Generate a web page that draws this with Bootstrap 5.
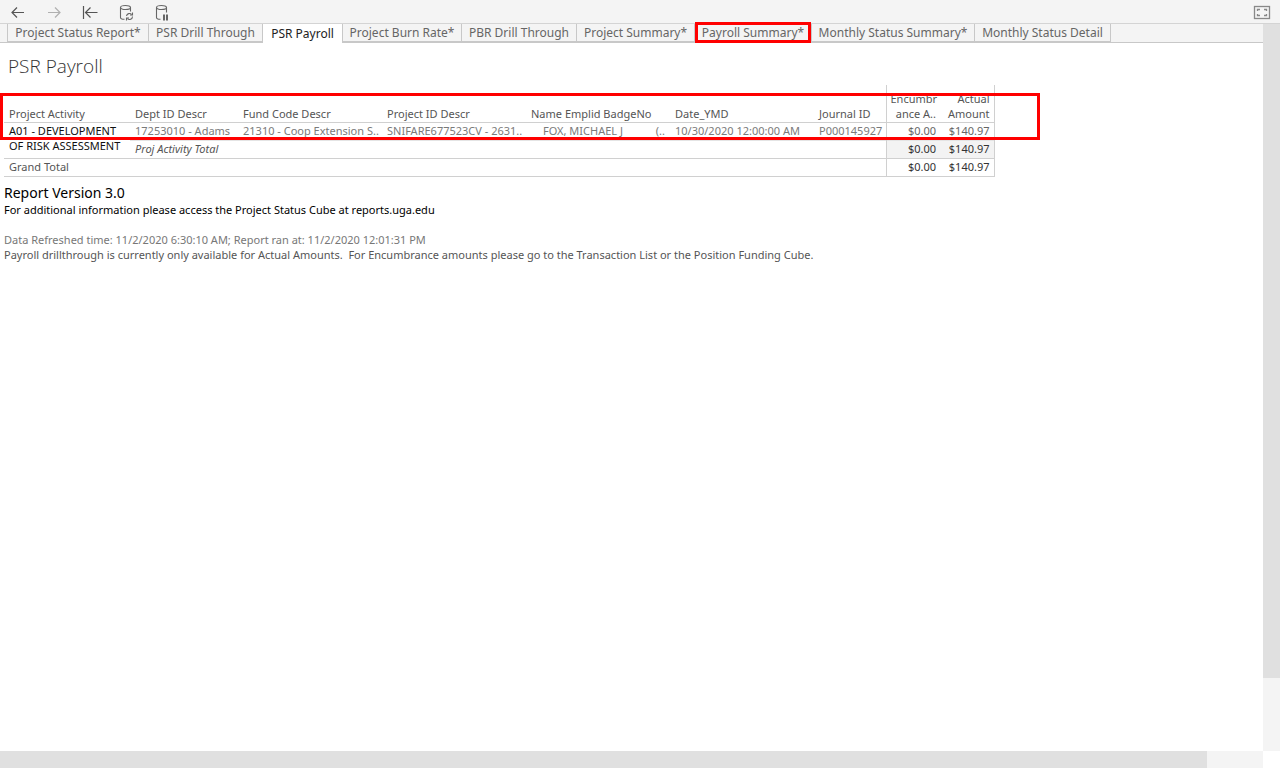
<!DOCTYPE html>
<html lang="en">
<head>
<meta charset="utf-8">
<meta name="viewport" content="width=device-width, initial-scale=1">
<title>PSR Payroll</title>
<link href="https://cdn.jsdelivr.net/npm/bootstrap@5.3.0/dist/css/bootstrap.min.css" rel="stylesheet">
<script src="https://cdn.jsdelivr.net/npm/bootstrap@5.3.0/dist/js/bootstrap.bundle.min.js" defer></script>
<style>
  :root { --line: #d0d0d0; --bar: #f4f4f4; --thumb: #e0e0e0; --hot: #f00; }
  body { font-family: "Noto Sans", "Open Sans", sans-serif; font-size: 11px; line-height: 15px; color: #555; }
  .toolbar { height: 24px; background: var(--bar); border-bottom: 1px solid #d4d4d4; padding: 0 8px; }
  .toolbar .tool { width: 20px; height: 22px; }
  .tools { gap: 16px; }
  .sheet-tabs { display: grid; grid-template-columns: 142px 114px 80px 119px 115px 118px 117px 163px 136px;
    height: 19px; background: var(--bar); border-bottom: 1px solid #c8c8c8; padding-left: 7px; }
  .sheet-tab { height: 18px; line-height: 17px; font-size: 12px; color: #666; background: var(--bar);
    border: 0; border-right: 1px solid #c8c8c8; border-bottom: 1px solid #c8c8c8; padding: 0; white-space: nowrap; }
  .sheet-tab:first-child { border-left: 1px solid #c8c8c8; }
  .sheet-tab.active { background: #fff; color: #222; height: 19px; line-height: 18px; border-bottom: 0; }
  .marked-tab { position: relative; z-index: 1; }
  .marked-tab::after { content: ""; position: absolute; inset: -2px 0 -2px 0; border: 3px solid var(--hot); }
  .view-title { font-family: "Open Sans", sans-serif; font-weight: 300; font-size: 19px; line-height: 24px; color: #333; padding: 11px 8px 7px; }
  .crosstab { width: 990px; table-layout: fixed; margin-left: 4px; border-bottom: 1px solid var(--line); }
  .crosstab th, .crosstab td { font-weight: 400; padding: 0 5px; white-space: nowrap; overflow: hidden; vertical-align: top; }
  .crosstab .amount { text-align: right; padding: 0 4px; }
  .crosstab .first-amount { border-left: 1px solid var(--line); }
  .crosstab .last-amount { border-right: 1px solid var(--line); }
  .crosstab thead th, .crosstab thead .amount { height: 37px; vertical-align: bottom; padding-bottom: 1px; border-bottom: 1px solid var(--line); }
  .crosstab .detail td { height: 18px; line-height: 15px; color: #7a7a7a; }
  .crosstab .detail .amount { color: #666; }
  .crosstab .detail .activity { white-space: normal; color: #111; }
  .crosstab .subtotal td { height: 18px; line-height: 15px; border-top: 1px solid #e4e4e4; }
  .crosstab .subtotal .amount { background: #f3f3f3; color: #333; }
  .crosstab .grand th, .crosstab .grand td { height: 18px; line-height: 15px; border-top: 1px solid var(--line); }
  .crosstab .grand .amount { color: #333; }
  .marked-row { position: absolute; left: 0; top: 8px; width: 1040px; height: 47px; border: 3px solid var(--hot); pointer-events: none; }
  .notes { padding: 7px 4px; }
  .notes .version { font-size: 14px; line-height: 18px; color: #000; }
  .notes .info { margin-bottom: 15px; color: #000; }
  .notes .stamp { color: #777; }
  .vbar { width: 17px; background: var(--bar); }
  .hbar { height: 17px; background: var(--bar); margin-right: 17px; }
  .thumb { background: var(--thumb); }
</style>
</head>
<body class="d-flex flex-column vh-100 overflow-hidden bg-white">
  <header class="toolbar d-flex align-items-center justify-content-between">
    <div class="tools d-flex">
      <button class="tool btn p-0 border-0 rounded-0 d-flex align-items-center justify-content-center" aria-label="Undo"><svg width="20" height="20" viewBox="0 0 20 20" fill="none" stroke="#555" stroke-width="1.2"><path d="M4 10.500H16M9 5.500L4 10.500L9 15.500"/></svg></button>
      <button class="tool btn p-0 border-0 rounded-0 d-flex align-items-center justify-content-center" aria-label="Redo"><svg width="20" height="20" viewBox="0 0 20 20" fill="none" stroke="#b0b0b0" stroke-width="1.2"><path d="M4 10.500H16M11 5.500L16 10.500L11 15.500"/></svg></button>
      <button class="tool btn p-0 border-0 rounded-0 d-flex align-items-center justify-content-center" aria-label="Revert"><svg width="20" height="20" viewBox="0 0 20 20" fill="none" stroke="#555" stroke-width="1.2"><path d="M3.500 4V17M5.500 10.500H17.500M10.500 5.500L5.500 10.500L10.500 15.500"/></svg></button>
      <button class="tool btn p-0 border-0 rounded-0 d-flex align-items-center justify-content-center" aria-label="Refresh"><svg width="20" height="20" viewBox="0 0 20 20" fill="none" stroke="#666" stroke-width="1.1"><ellipse cx="9.500" cy="5.500" rx="5" ry="2"/><path d="M4.500 5.500V15.500Q4.500 17.300 8.500 17.300M14.500 5.500V9.500M10.500 14A3 3 0 0 1 15.700 12.500M16.500 14.500A3 3 0 0 1 11.300 16.500"/><path d="M16.500 10.500V13H14M10.500 18.500V16H13"/></svg></button>
      <button class="tool btn p-0 border-0 rounded-0 d-flex align-items-center justify-content-center" aria-label="Pause"><svg width="20" height="20" viewBox="0 0 20 20" fill="none" stroke="#666" stroke-width="1.1"><ellipse cx="9.500" cy="5.500" rx="5" ry="2"/><path d="M4.500 5.500V15.500Q4.500 17.300 8.500 17.300M14.500 5.500V10.500"/><path d="M12 12.500V18.500M15 12.500V18.500" stroke-width="2"/></svg></button>
    </div>
    <button class="tool btn p-0 border-0 rounded-0 d-flex align-items-center justify-content-center" aria-label="Full screen"><svg width="20" height="20" viewBox="0 0 20 20" fill="none" stroke="#888"><rect x="2.500" y="4.500" width="15" height="12" stroke-width="1.300"/><path d="M5.500 9V7.500H8M12 7.500H14.500V9M14.500 12V13.500H12M8 13.500H5.500V12" stroke-width="1.300"/></svg></button>
  </header>

  <div class="d-flex flex-grow-1">
    <main class="flex-grow-1">
      <nav class="sheet-tabs" aria-label="Sheets">
        <button class="sheet-tab">Project Status Report*</button>
        <button class="sheet-tab">PSR Drill Through</button>
        <button class="sheet-tab active">PSR Payroll</button>
        <button class="sheet-tab">Project Burn Rate*</button>
        <button class="sheet-tab">PBR Drill Through</button>
        <button class="sheet-tab">Project Summary*</button>
        <button class="sheet-tab marked-tab">Payroll Summary*</button>
        <button class="sheet-tab">Monthly Status Summary*</button>
        <button class="sheet-tab">Monthly Status Detail</button>
      </nav>
      <h1 class="view-title m-0">PSR Payroll</h1>
      <div class="position-relative">
        <table class="crosstab">
          <colgroup><col style="width:126px"><col style="width:108px"><col style="width:144px"><col style="width:144px"><col style="width:144px"><col style="width:144px"><col style="width:72px"><col style="width:54px"><col style="width:54px"></colgroup>
          <thead>
            <tr>
              <th scope="col">Project Activity</th><th scope="col">Dept ID Descr</th><th scope="col">Fund Code Descr</th><th scope="col">Project ID Descr</th><th scope="col">Name Emplid BadgeNo</th><th scope="col">Date_YMD</th><th scope="col">Journal ID</th>
              <th scope="col" class="amount first-amount">Encumbr<br>ance A..</th><th scope="col" class="amount last-amount">Actual<br>Amount</th>
            </tr>
          </thead>
          <tbody>
            <tr class="detail">
              <td rowspan="2" class="activity">A01 - DEVELOPMENT OF RISK ASSESSMENT</td>
              <td>17253010 - Adams</td><td>21310 - Coop Extension S..</td><td>SNIFARE677523CV - 2631..</td>
              <td><span class="d-flex justify-content-between ps-2 ms-1"><span>FOX, MICHAEL J</span><span>(..</span></span></td>
              <td>10/30/2020 12:00:00 AM</td><td>P000145927</td><td class="amount first-amount">$0.00</td><td class="amount last-amount">$140.97</td>
            </tr>
            <tr class="subtotal">
              <td colspan="6"><em>Proj Activity Total</em></td><td class="amount first-amount">$0.00</td><td class="amount last-amount">$140.97</td>
            </tr>
            <tr class="grand">
              <th scope="row" colspan="7">Grand Total</th><td class="amount first-amount">$0.00</td><td class="amount last-amount">$140.97</td>
            </tr>
          </tbody>
        </table>
        <div class="marked-row"></div>
      </div>
      <section class="notes">
        <p class="version m-0">Report Version 3.0</p>
        <p class="info">For additional information please access the Project Status Cube at reports.uga.edu</p>
        <p class="stamp m-0">Data Refreshed time: 11/2/2020 6:30:10 AM; Report ran at: 11/2/2020 12:01:31 PM</p>
        <p class="m-0">Payroll drillthrough is currently only available for Actual Amounts.&nbsp; For Encumbrance amounts please go to the Transaction List or the Position Funding Cube.</p>
      </section>
    </main>
    <div class="vbar flex-shrink-0"><div class="thumb" style="height:90%"></div></div>
  </div>
  <div class="hbar flex-shrink-0"><div class="thumb h-100" style="width:95.6%"></div></div>
</body>
</html>
